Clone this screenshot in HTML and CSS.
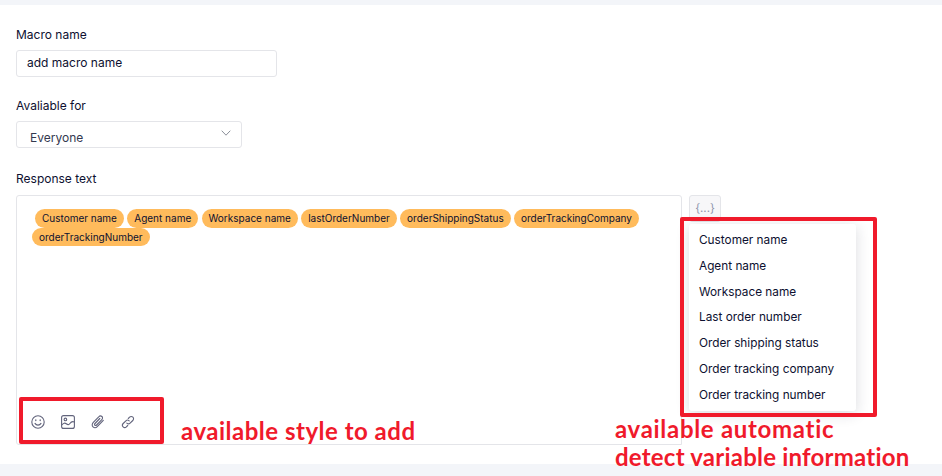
FILE: index.html
```html
<!DOCTYPE html>
<html lang="en">
<head>
<meta charset="utf-8">
<title>Macro</title>
<link rel="stylesheet" href="styles.css">
</head>
<body>
<main class="panel">
  <section class="field name-field">
    <label class="label">Macro name</label>
    <div class="input">add macro name</div>
  </section>
  <section class="field avail-field">
    <label class="label">Avaliable for</label>
    <div class="select">
      <span>Everyone</span>
      <svg class="chev" width="10" height="6" viewBox="0 0 10 6"><path d="M.7.7 5 5.2 9.3.7" fill="none" stroke="#8b8f99" stroke-width="1"/></svg>
    </div>
  </section>
  <section class="field response-field">
    <label class="label">Response text</label>
    <div class="response-row">
      <div class="editor">
        <div class="tags">
          <span class="tag first">Customer name</span>
          <span class="tag">Agent name</span>
          <span class="tag">Workspace name</span>
          <span class="tag">lastOrderNumber</span>
          <span class="tag">orderShippingStatus</span>
          <span class="tag">orderTrackingCompany</span>
          <span class="tag last">orderTrackingNumber</span>
        </div>
        <div class="tools">
          <svg class="tool" viewBox="0 0 14 14" width="14" height="14"><circle cx="7" cy="7" r="6.2"/><path d="M4 8.4c.7 1.2 1.7 1.7 3 1.7s2.3-.5 3-1.700"/><path d="M4.800 5v.6M9.200 5v.6" stroke-width="1.300"/></svg>
          <svg class="tool" viewBox="0 0 14 14" width="14" height="14"><rect x=".6" y=".6" width="12.800" height="12.800" rx="2"/><circle cx="4.400" cy="4.400" r="1.300"/><path d="M.8 10c1.600-2 3-2.400 4.500-1.200s2.600 1.200 3.600-.3 2.600-2.500 4.500-1.500"/></svg>
          <svg class="tool" viewBox="0 0 14 14" width="14" height="14"><path d="M12.300 5.300 6.500 11.400c-1.300 1.400-3.300 1.600-4.500.5s-1-3.100.3-4.500L7.700 1.800c.9-1 2.300-1.100 3.200-.3s.8 2.200-.1 3.100L5.600 10c-.5.5-1.200.6-1.700.2s-.4-1.200.1-1.700l4.800-5"/></svg>
          <svg class="tool" viewBox="0 0 14 14" width="14" height="14"><path d="M5.800 8.200c1 1 2.400.9 3.300 0l2.700-2.700c1-1 1-2.400.1-3.300s-2.400-.9-3.300 0L7.300 3.500"/><path d="M8.200 5.800c-1-1-2.400-.9-3.300 0L2.200 8.500c-1 1-1 2.400-.1 3.300s2.400.9 3.300 0l1.300-1.300"/></svg>
        </div>
      </div>
      <div class="side">
        <button class="var-btn" type="button">{...}</button>
      </div>
    </div>
  </section>
  <ul class="menu">
    <li>Customer name</li>
    <li>Agent name</li>
    <li>Workspace name</li>
    <li>Last order number</li>
    <li>Order shipping status</li>
    <li>Order tracking company</li>
    <li>Order tracking number</li>
  </ul>
  <div class="mark mark-menu"></div>
  <div class="mark mark-tools"></div>
  <p class="note note-style">available style to add</p>
  <p class="note note-var"><span class="line-a">available automatic</span><br><span class="line-b">detect variable information</span></p>
</main>
</body>
</html>
```
FILE: styles.css
```css
* { box-sizing: border-box; }
html, body { margin: 0; height: 100%; }
body {
  background: #f3f5f9;
  padding: 5px 0 12px;
  font-family: Inter, "Liberation Sans", sans-serif;
  font-size: 12px;
  color: #0d1030;
  overflow: hidden;
}
.panel {
  position: relative;
  height: 459px;
  background: #fff;
  padding: 22px 0 0 16px;
}
.label { display: block; line-height: 16px; }
.field { display: flex; flex-direction: column; }
.input {
  width: 261px;
  height: 27px;
  margin-top: 7px;
  padding-left: 10px;
  border: 1px solid #e4e5e9;
  border-radius: 3px;
  line-height: 24px;
}
.avail-field { margin-top: 21px; }
.select {
  display: flex;
  justify-content: space-between;
  width: 226px;
  height: 27px;
  margin-top: 7px;
  padding: 0 10px 0 13px;
  border: 1px solid #e4e5e9;
  border-radius: 3px;
  line-height: 31px;
  color: #33384f;
}
.chev { margin-top: 8px; }
.response-field { margin-top: 23px; }
.response-row { display: flex; gap: 7px; margin-top: 8px; }
.editor {
  display: flex;
  flex-direction: column;
  justify-content: space-between;
  width: 666px;
  height: 250px;
  padding: 13px 0 15px 15px;
  border: 1px solid #e4e5e9;
  border-radius: 3px 3px 0 3px;
}
.tags { display: flex; flex-wrap: wrap; gap: 0 3.300px; width: 620px; }
.tag {
  height: 19px;
  padding: 0 7px;
  border-radius: 10px;
  background: #ffbb5c;
  font-size: 10px;
  line-height: 19px;
  color: #0d1030;
  white-space: nowrap;
}
.first { margin-left: 3px; }
.last { height: 18px; line-height: 18px; }
.tools { display: flex; gap: 16px; margin-left: -1px; }
.tool { fill: none; stroke: #62647c; stroke-width: 1.100; stroke-linecap: round; stroke-linejoin: round; }
.side { width: 32px; }
.var-btn {
  display: block;
  width: 32px;
  height: 27px;
  padding: 0;
  border: 1px solid #e4e5e9;
  border-radius: 3px;
  background: #f7f7f9;
  font: 11.500px/23px Inter, "Liberation Sans", sans-serif;
  color: #8d94ab;
}
.menu {
  position: absolute;
  left: 689px;
  top: 219px;
  width: 167px;
  height: 187px;
  margin: 0;
  padding: 4px 0 0;
  list-style: none;
  background: #fff;
  border-radius: 3px;
  box-shadow: 0 3px 14px rgba(30, 35, 60, .16);
}
.menu li { height: 25.800px; padding-left: 10px; font-size: 11.800px; line-height: 25.800px; }
.mark {
  position: absolute;
  border: 4px solid #f01a2b;
  border-radius: 2px;
}
.mark-menu { left: 680px; top: 212px; width: 197px; height: 200px; }
.mark-tools { left: 19px; top: 392px; width: 145px; height: 47px; }
.note {
  position: absolute;
  margin: 0;
  font-family: Lato, "Liberation Sans", sans-serif;
  font-weight: 700;
  font-size: 24px;
  line-height: 28px;
  color: #f01a2b;
  white-space: nowrap;
}
.note-style { left: 181px; top: 412px; letter-spacing: .5px; }
.note-var { left: 615px; top: 410px; }
.line-a { letter-spacing: .7px; }
.line-b { letter-spacing: .22px; }
```
